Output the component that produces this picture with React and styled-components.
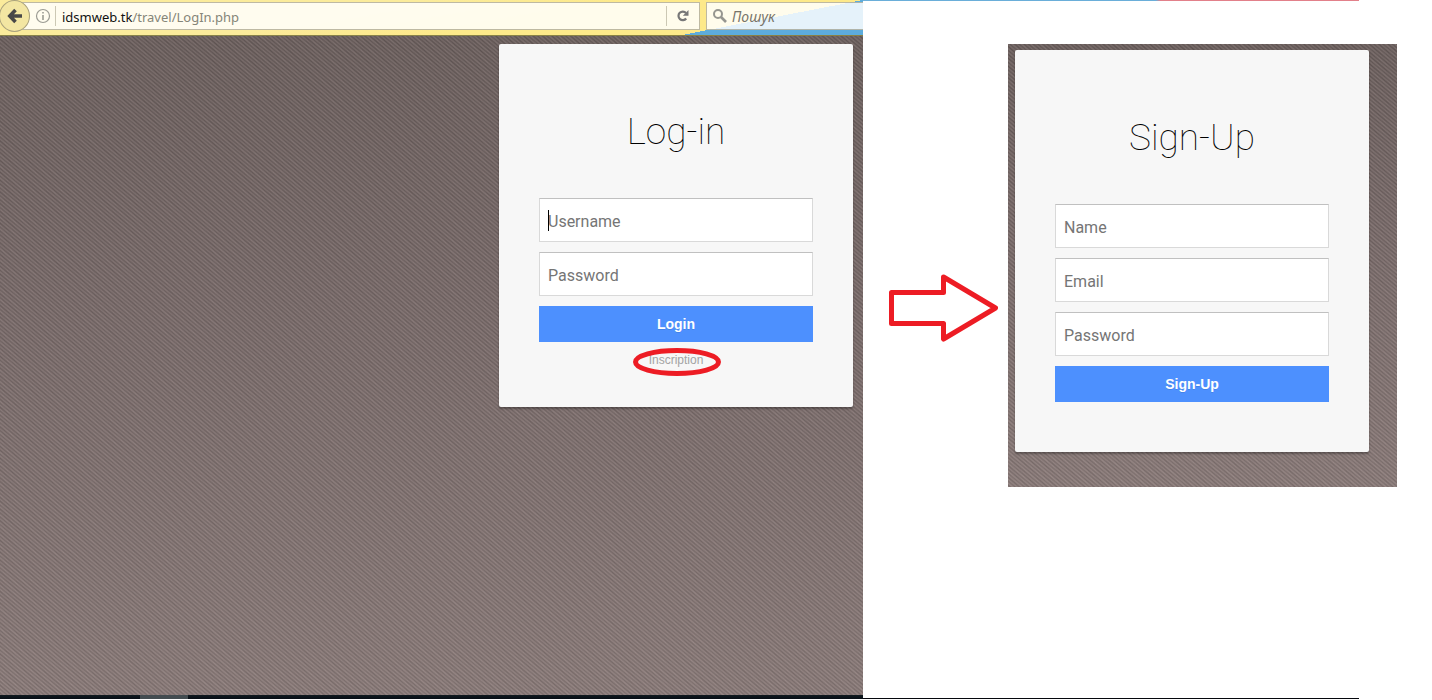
import React from "react";
import styled, { createGlobalStyle, css } from "styled-components";

const GlobalStyle = createGlobalStyle`
  *, *::before, *::after { box-sizing: border-box; }
  body {
    margin: 0;
    background: #fff;
    font-family: "Liberation Sans", Arial, sans-serif;
  }
`;

const twill = css`
  background-image:
    repeating-linear-gradient(40deg, rgba(255, 236, 234, 0.1) 0, rgba(0, 0, 0, 0.1) 1.5px, rgba(255, 236, 234, 0.1) 3px),
    repeating-linear-gradient(47deg, rgba(0, 0, 0, 0.03) 0, rgba(255, 236, 234, 0.03) 4px, rgba(0, 0, 0, 0.03) 7px),
    linear-gradient(#6a5e5c, #776968 40%, #897a78);
`;

const Page = styled.div`
  display: flex;
  min-height: calc(100vh - 1px);
`;

const Browser = styled.section`
  flex: 863 1 0;
  min-width: 0;
  display: flex;
  flex-direction: column;
`;

const Toolbar = styled.header`
  display: flex;
  align-items: flex-start;
  height: 36px;
  padding-top: 2px;
  overflow: hidden;
  border-bottom: 1px solid rgba(60, 60, 20, 0.6);
  background:
    linear-gradient(to bottom right, transparent 50%, #5dacdc 50%) no-repeat right bottom / 181px 35px,
    linear-gradient(170deg, #fbeb9b 40%, #fde98a 60%);
`;

const BackButton = styled.button`
  position: relative;
  flex: none;
  display: grid;
  place-items: center;
  width: 31px;
  height: 32px;
  margin: -2px -14px 0 -1px;
  padding: 0;
  border: 1px solid #aaa27c;
  border-radius: 50%;
  background: #f3e6a2;
`;

const Field = styled.div`
  display: flex;
  align-items: center;
  height: 28px;
  border: 1px solid rgba(110, 105, 70, 0.45);
  background: rgba(255, 255, 255, 0.84);
`;

const AddressField = styled(Field)`
  position: relative;
  flex: 1;
  min-width: 0;
  margin-right: 6px;
  padding-left: 14px;
  z-index: 0;
`;

const BackLayer = styled.div`
  flex: none;
  position: relative;
  z-index: 1;
`;

const SearchField = styled(Field)`
  flex: none;
  width: 157px;
  gap: 4px;
  padding-left: 5px;
  border-right: 0;
`;

const Divider = styled.span`
  width: 1px;
  height: 20px;
  background: #ccc8b4;
`;

const Address = styled.a`
  flex: 1;
  min-width: 0;
  margin-left: 6px;
  padding-top: 2px;
  font: 13px/20px "Noto Sans", sans-serif;
  color: #858578;
  text-decoration: none;
  white-space: nowrap;
`;

const Host = styled.span`
  color: #111;
`;

const IconButton = styled.button`
  display: grid;
  place-items: center;
  width: ${(p) => p.$width}px;
  height: 26px;
  padding: 0;
  border: 0;
  background: none;
`;

const SearchInput = styled.input`
  flex: 1;
  min-width: 0;
  padding: 2px 0 0;
  border: 0;
  outline: 0;
  background: none;
  font: italic 14px/20px "Noto Sans", sans-serif;
  &::placeholder { color: #77746a; opacity: 1; }
`;

const Site = styled.main`
  ${twill}
  flex: 1;
  display: flex;
  justify-content: flex-end;
  align-items: flex-start;
  padding: 8px 10px;
`;

const Taskbar = styled.footer`
  display: flex;
  height: 4px;
  padding-left: 140px;
  background: linear-gradient(#111b20, #060d14);
`;

const TaskbarItem = styled.span`
  width: 48px;
  background: #434c50;
`;

const Aside = styled.section`
  flex: 569 1 0;
  min-width: 0;
  display: flex;
  flex-direction: column;
`;

const Strip = styled.div`
  height: 1px;
  margin-right: 73px;
  background: ${(p) => p.$fill};
`;

const Flow = styled.div`
  flex: 1;
  display: flex;
  align-items: flex-start;
  justify-content: flex-end;
  gap: 10px;
  padding: 43px 35px 0 0;
`;

const ArrowIcon = styled.svg`
  flex: none;
  align-self: flex-start;
  margin-top: 230px;
`;

const Panel = styled.div`
  ${twill}
  padding: 6px 28px 35px 7px;
`;

const Card = styled.form`
  width: 354px;
  display: flex;
  flex-direction: column;
  gap: 10px;
  padding: 66px 40px ${(p) => p.$bottom}px;
  border-radius: 2px;
  background: #f7f7f7;
  box-shadow: 0 2px 2px rgba(0, 0, 0, 0.3);
`;

const Title = styled.h1`
  margin: 0 0 34px;
  font: 100 37px/44px Roboto, sans-serif;
  color: #000;
  text-align: center;
`;

const InputLabel = styled.label`
  position: relative;
  display: block;
`;

const Input = styled.input`
  display: block;
  width: 100%;
  height: 44px;
  padding: 2px 8px 0;
  border: 1px solid #d9d9d9;
  border-top-color: #c0c0c0;
  border-radius: 0;
  outline: 0;
  background: #fff;
  font: 16px/20px Roboto, sans-serif;
  color: #404040;
  &::placeholder { color: #757575; opacity: 1; }
`;

const Caret = styled.span`
  position: absolute;
  left: 9px;
  top: 12px;
  width: 1px;
  height: 21px;
  background: #000;
`;

const Submit = styled.button`
  height: 36px;
  padding: 0;
  border: 0;
  background: #4d90fe;
  color: #fff;
  font: bold 14px/20px "Liberation Sans", Arial, sans-serif;
  text-shadow: 0 1px rgba(0, 0, 0, 0.1);
`;

const Help = styled.div`
  position: relative;
  text-align: center;
  font-size: 12px;
  line-height: 16px;
`;

const HelpLink = styled.a`
  color: #a3a3a3;
  text-decoration: none;
`;

const Ring = styled.svg`
  position: absolute;
  left: 50%;
  top: 50%;
  margin: -12px 0 0 -43px;
`;

function TextField({ label, type = "text", caret }) {
  return (
    <InputLabel>
      <Input type={type} placeholder={label} aria-label={label} />
      {caret && <Caret />}
    </InputLabel>
  );
}

export default function App() {
  return (
    <>
      <GlobalStyle />
      <Page>
        <Browser>
          <Toolbar>
            <BackLayer>
              <BackButton type="button" aria-label="Back">
                <svg width="16" height="16" viewBox="0 0 16 16" fill="none" stroke="#484848" strokeWidth="3.6">
                  <path d="M8.500 2 2.800 8l5.700 6M3.500 8H15" />
                </svg>
              </BackButton>
            </BackLayer>
            <AddressField>
              <IconButton type="button" aria-label="Site information" $width={24}>
                <svg width="16" height="16" viewBox="0 0 16 16" fill="none" stroke="#9b9b93">
                  <circle cx="8" cy="8" r="6.5" strokeWidth="1.2" />
                  <path d="M8 7v5M8 4v1.6" strokeWidth="1.6" />
                </svg>
              </IconButton>
              <Divider />
              <Address href="#login">
                <Host>idsmweb.tk</Host>/travel/LogIn.php
              </Address>
              <Divider />
              <IconButton type="button" aria-label="Reload" $width={32}>
                <svg width="14" height="14" viewBox="0 0 14 14">
                  <path d="M10.2 9.5A4.3 4.3 0 1 1 10 4" fill="none" stroke="#777" strokeWidth="2.2" />
                  <path d="M12.5 1v5.8H6.8z" fill="#777" />
                </svg>
              </IconButton>
            </AddressField>
            <SearchField>
              <svg width="16" height="16" viewBox="0 0 16 16" fill="none" stroke="#969690">
                <circle cx="6" cy="6" r="4" strokeWidth="2" />
                <path d="m9 9 5 5" strokeWidth="2.6" />
              </svg>
              <SearchInput type="text" placeholder="Пошук" aria-label="Пошук" />
            </SearchField>
          </Toolbar>
          <Site>
            <Card $bottom={39}>
              <Title>Log-in</Title>
              <TextField label="Username" caret />
              <TextField label="Password" type="password" />
              <Submit type="button">Login</Submit>
              <Help>
                <HelpLink href="#inscription">Inscription</HelpLink>
                <Ring width="88" height="28" viewBox="0 0 88 28" fill="none" stroke="#ed1c24" strokeWidth="5">
                  <ellipse cx="44" cy="14" rx="41.5" ry="11.5" />
                </Ring>
              </Help>
            </Card>
          </Site>
          <Taskbar>
            <TaskbarItem />
          </Taskbar>
        </Browser>
        <Aside>
          <Strip $fill="linear-gradient(90deg, #6aaed9 59%, #e2808a 60%)" />
          <Flow>
            <ArrowIcon width="109" height="68" viewBox="0 0 109 68" fill="none" stroke="#ed1c24" strokeWidth="5" strokeLinejoin="round">
              <path d="M2.5 18.5h52V3l52 31-52 31V49.500h-52z" />
            </ArrowIcon>
            <Panel>
              <Card $bottom={50}>
                <Title>Sign-Up</Title>
                <TextField label="Name" />
                <TextField label="Email" type="email" />
                <TextField label="Password" type="password" />
                <Submit type="button">Sign-Up</Submit>
              </Card>
            </Panel>
          </Flow>
          <Strip $fill="#05070c" />
        </Aside>
      </Page>
    </>
  );
}
